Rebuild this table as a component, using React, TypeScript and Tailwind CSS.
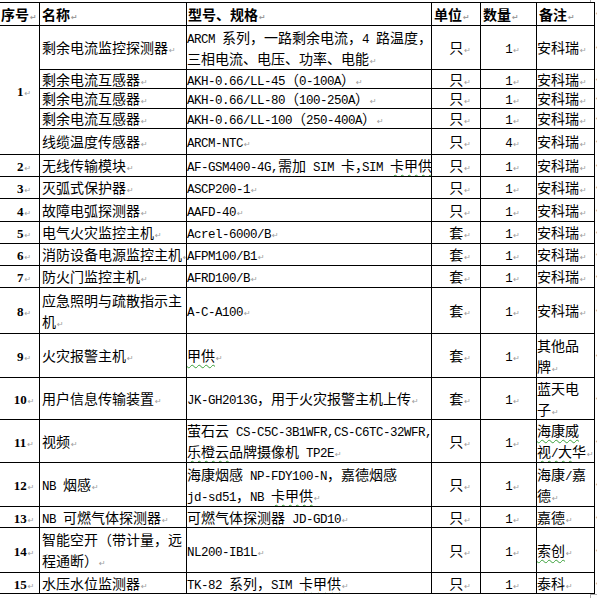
import React from "react";

const MONO = "font-['Liberation_Mono',monospace] text-[12.5px] tracking-[-0.5px] leading-none";

function Pm() {
  return (
    <span className="ml-px font-['DejaVu_Sans',sans-serif] text-[8px] leading-none text-[#9c9c9c]">↵</span>
  );
}

function Runs({ s }: { s: string }) {
  const parts = s.split(/([\x20-\x7e]+)/);
  return (
    <>
      {parts.map((p, i) =>
        p === "" ? null : /^[\x20-\x7e]+$/.test(p) ? (
          <span key={i} className={MONO}>
            {p}
          </span>
        ) : (
          <React.Fragment key={i}>{p}</React.Fragment>
        )
      )}
    </>
  );
}

function Wavy({ children }: { children: React.ReactNode }) {
  return (
    <span className="underline decoration-wavy decoration-[#3aa03a] decoration-1 underline-offset-[3px]">
      {children}
    </span>
  );
}

function Tx({ s }: { s: string }) {
  const segs = s.split("~");
  return (
    <>
      {segs.map((g, i) =>
        i % 2 === 1 ? (
          <Wavy key={i}>
            <Runs s={g} />
          </Wavy>
        ) : (
          <Runs key={i} s={g} />
        )
      )}
    </>
  );
}

type R = {
  n?: string;
  span?: boolean;
  name: string;
  spec: React.ReactNode;
  unit: string;
  qty: string;
  note: string;
};

const row2Spec = (
  <>
    <Runs s="AF-GSM400-4G,需加 SIM 卡" />
    <span className="tracking-[-7px]">，</span>
    <Runs s="SIM " />
    <Wavy>卡甲供</Wavy>
  </>
);

const rows: R[] = [
  {
    n: "1",
    span: true,
    name: "剩余电流监控探测器",
    spec: "ARCM 系列，一路剩余电流，4 路温度，\n三相电流、电压、功率、电能",
    unit: "只",
    qty: "1",
    note: "安科瑞",
  },
  { name: "剩余电流互感器", spec: "AKH-0.66/LL-45（0-100A）", unit: "只", qty: "1", note: "安科瑞" },
  { name: "剩余电流互感器", spec: "AKH-0.66/LL-80（100-250A）", unit: "只", qty: "1", note: "安科瑞" },
  { name: "剩余电流互感器", spec: "AKH-0.66/LL-100（250-400A）", unit: "只", qty: "1", note: "安科瑞" },
  { name: "线缆温度传感器", spec: "ARCM-NTC", unit: "只", qty: "4", note: "安科瑞" },
  { n: "2", name: "无线传输模块", spec: row2Spec, unit: "只", qty: "1", note: "安科瑞" },
  { n: "3", name: "灭弧式保护器", spec: "ASCP200-1", unit: "只", qty: "1", note: "安科瑞" },
  { n: "4", name: "故障电弧探测器", spec: "AAFD-40", unit: "只", qty: "1", note: "安科瑞" },
  { n: "5", name: "电气火灾监控主机", spec: "Acrel-6000/B", unit: "套", qty: "1", note: "安科瑞" },
  { n: "6", name: "消防设备电源监控主机", spec: "AFPM100/B1", unit: "套", qty: "1", note: "安科瑞" },
  { n: "7", name: "防火门监控主机", spec: "AFRD100/B", unit: "套", qty: "1", note: "安科瑞" },
  { n: "8", name: "应急照明与疏散指示主\n机", spec: "A-C-A100", unit: "套", qty: "1", note: "安科瑞" },
  { n: "9", name: "火灾报警主机", spec: "~甲供~", unit: "套", qty: "1", note: "其他品\n牌" },
  {
    n: "10",
    name: "用户信息传输装置",
    spec: "JK-GH2013G，用于火灾报警主机上传",
    unit: "套",
    qty: "1",
    note: "蓝天电\n子",
  },
  {
    n: "11",
    name: "视频",
    spec: "萤石云 CS-C5C-3B1WFR,CS-C6TC-32WFR,\n~乐橙云~品牌摄像机 TP2E",
    unit: "只",
    qty: "1",
    note: "~海康威~\n~视/大~华",
  },
  {
    n: "12",
    name: "NB 烟感",
    spec: "海康烟感 NP-FDY100-N，嘉德烟感\njd-sd51，NB ~卡甲供~",
    unit: "只",
    qty: "1",
    note: "海康/嘉\n德",
  },
  { n: "13", name: "NB 可燃气体探测器", spec: "可燃气体探测器 JD-GD10", unit: "只", qty: "1", note: "嘉德" },
  { n: "14", name: "智能空开（带计量，远\n程通断）", spec: "NL200-IB1L", unit: "只", qty: "1", note: "~索创~" },
  { n: "15", name: "水压水位监测器", spec: "TK-82 系列，SIM ~卡甲供~", unit: "只", qty: "1", note: "泰科" },
];

function Mark() {
  return (
    <div className="flex items-center overflow-hidden">
      <span className="ml-px font-['DejaVu_Sans',sans-serif] text-[8px] leading-none text-[#9c9c9c]">↵</span>
    </div>
  );
}

export default function App() {
  return (
    <div className="relative h-[598px] w-[597px] overflow-hidden bg-white text-black">
      <div className="absolute left-[590px] top-0 h-[2px] w-px bg-[#a8a8a8]" />
      <div className="mt-[2px] grid grid-cols-[40px_147px_245px_49px_56px_58px_3px] grid-rows-[24px_44px_19px_20px_20px_26px_22px_22px_23px_22px_22px_22px_46px_44px_42px_43px_44px_21px_45px_21px] font-['Noto_Sans_CJK_SC',sans-serif] text-[14px] leading-[21px]">
        {["序号", "名称", "型号、规格", "单位", "数量", "备注"].map((h, i) => (
          <div
            key={h}
            className={
              "flex items-center overflow-hidden whitespace-pre border-t border-r border-b border-black font-bold " +
              (i === 0 ? "pl-px" : i === 2 ? "pl-px" : "pl-[2px]")
            }
          >
            <span>
              {h}
              <Pm />
            </span>
          </div>
        ))}
        <Mark />

        {rows.map((r, idx) => (
          <React.Fragment key={idx}>
            {r.n !== undefined && (
              <div
                className={
                  "flex items-center justify-center overflow-hidden whitespace-pre border-r border-b border-black pl-[9px] " +
                  (r.span ? "row-span-5" : "")
                }
              >
                <span>
                  <span className="font-['Liberation_Serif',serif] text-[13px] leading-none font-bold">{r.n}</span>
                  <Pm />
                </span>
              </div>
            )}
            <div className="flex items-center overflow-hidden whitespace-pre border-r border-b border-black pl-[2px]">
              <span>
                <Tx s={r.name} />
                <Pm />
              </span>
            </div>
            <div className="flex items-center overflow-hidden whitespace-pre border-r border-b border-black">
              <span>
                {typeof r.spec === "string" ? <Tx s={r.spec} /> : r.spec}
                <Pm />
              </span>
            </div>
            <div className="flex items-center justify-center overflow-hidden whitespace-pre border-r border-b border-black pl-[8px]">
              <span>
                {r.unit}
                <Pm />
              </span>
            </div>
            <div className="flex items-center justify-center overflow-hidden whitespace-pre border-r border-b border-black pl-[8px]">
              <span>
                <Runs s={r.qty} />
                <Pm />
              </span>
            </div>
            <div className="flex items-center overflow-hidden whitespace-pre border-r border-b border-black">
              <span>
                <Tx s={r.note} />
                <Pm />
              </span>
            </div>
            <Mark />
          </React.Fragment>
        ))}
      </div>
      <div className="absolute left-[590px] top-[594px] h-px w-[7px] bg-[#a8a8a8]" />
      <div className="absolute left-[590px] top-[594px] h-[4px] w-px bg-[#a8a8a8]" />
    </div>
  );
}
